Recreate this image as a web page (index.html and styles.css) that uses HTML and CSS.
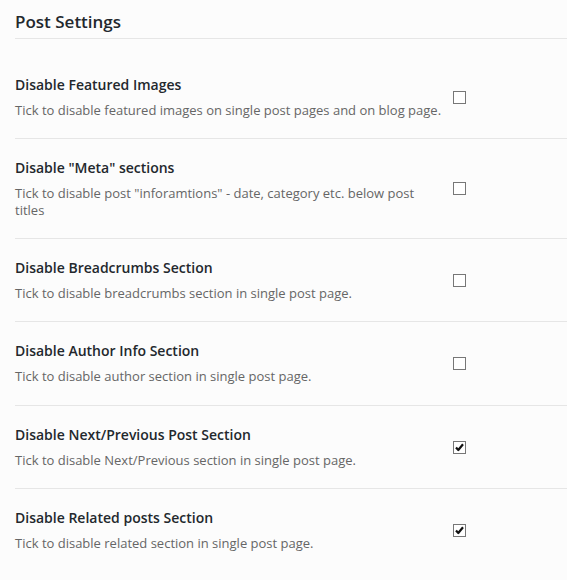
FILE: index.html
```html
<!DOCTYPE html>
<html>
<head>
<meta charset="utf-8">
<link rel="stylesheet" href="styles.css">
</head>
<body>
<div class="panel">
  <h2 class="title">Post Settings</h2>
  <div class="rows">
    <div class="row first">
      <div class="text">
        <div class="label">Disable Featured Images</div>
        <div class="desc">Tick to disable featured images on single post pages and on blog page.</div>
      </div>
      <span class="box"></span>
    </div>
    <div class="row">
      <div class="text">
        <div class="label">Disable "Meta" sections</div>
        <div class="desc">Tick to disable post "inforamtions" - date, category etc. below post titles</div>
      </div>
      <span class="box"></span>
    </div>
    <div class="row">
      <div class="text">
        <div class="label">Disable Breadcrumbs Section</div>
        <div class="desc">Tick to disable breadcrumbs section in single post page.</div>
      </div>
      <span class="box"></span>
    </div>
    <div class="row tall">
      <div class="text">
        <div class="label">Disable Author Info Section</div>
        <div class="desc">Tick to disable author section in single post page.</div>
      </div>
      <span class="box"></span>
    </div>
    <div class="row">
      <div class="text">
        <div class="label">Disable Next/Previous Post Section</div>
        <div class="desc">Tick to disable Next/Previous section in single post page.</div>
      </div>
      <span class="box checked"><svg viewBox="0 0 11 11" width="11" height="11"><path d="M2 5.5 L4.3 8 L9 2.3" fill="none" stroke="#111" stroke-width="2.2" stroke-linejoin="round"/></svg></span>
    </div>
    <div class="row last">
      <div class="text">
        <div class="label">Disable Related posts Section</div>
        <div class="desc">Tick to disable related section in single post page.</div>
      </div>
      <span class="box checked"><svg viewBox="0 0 11 11" width="11" height="11"><path d="M2 5.5 L4.3 8 L9 2.3" fill="none" stroke="#111" stroke-width="2.2" stroke-linejoin="round"/></svg></span>
    </div>
  </div>
</div>
</body>
</html>
```
FILE: styles.css
```css
html, body {
  margin: 0;
  padding: 0;
  background: #fcfcfc;
}
body {
  font-family: "Open Sans", "Liberation Sans", sans-serif;
  color: #23282d;
}
.panel {
  padding-left: 15px;
}
.title {
  margin: 0;
  padding-top: 10px;
  height: 28px;
  font-size: 17px;
  font-weight: 600;
  line-height: 24px;
  border-bottom: 1px solid #e6e6e6;
}
.row {
  display: flex;
  align-items: center;
  border-bottom: 1px solid #e6e6e6;
  padding: 19px 0 19px 0;
}
.row.first {
  padding-top: 36px;
  padding-bottom: 19px;
}
.row.tall {
  padding-bottom: 20px;
}
.row.last {
  border-bottom: none;
}
.text {
  width: 428px;
}
.label {
  font-size: 14px;
  font-weight: 600;
  line-height: 20px;
  color: #23282d;
}
.desc {
  margin-top: 7px;
  font-size: 13px;
  line-height: 17px;
  color: #666;
}
.box {
  margin-left: 10px;
  width: 11px;
  height: 11px;
  border: 1px solid #777;
  background: #fff;
  display: flex;
  align-items: center;
  justify-content: center;
}
.box svg {
  display: block;
}
```
